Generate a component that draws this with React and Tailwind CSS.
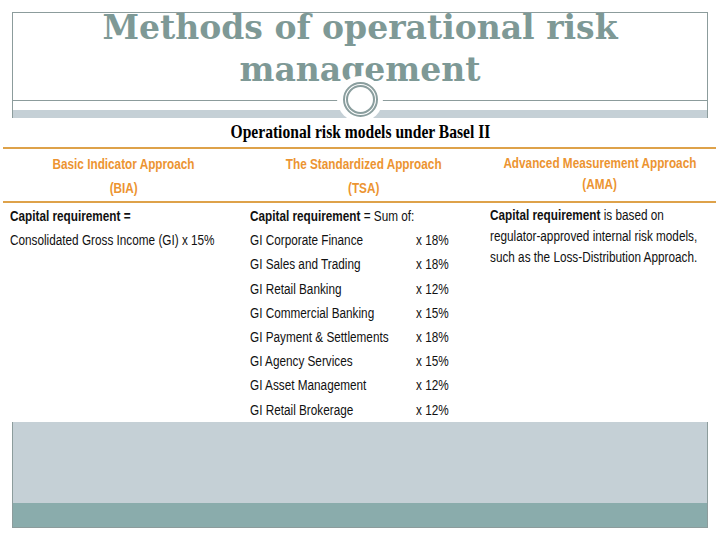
import React from 'react';

// no narrow face is installed, so Liberation Sans gets squeezed horizontally
const sans = "font-['Liberation_Sans',Arial,sans-serif]";

const tsaRows = [
  ['GI Corporate Finance', 'x 18%'],
  ['GI Sales and Trading', 'x 18%'],
  ['GI Retail Banking', 'x 12%'],
  ['GI Commercial Banking', 'x 15%'],
  ['GI Payment & Settlements', 'x 18%'],
  ['GI Agency Services', 'x 15%'],
  ['GI Asset Management', 'x 12%'],
  ['GI Retail Brokerage', 'x 12%'],
];

function Head({ lines, className }) {
  return (
    <div className={`flex flex-col items-center ${className}`}>
      {lines.map((l) => (
        <div key={l} className="whitespace-nowrap scale-x-[0.84]">{l}</div>
      ))}
    </div>
  );
}

export default function App() {
  return (
    <div className="w-[720px] h-[540px] bg-white overflow-hidden pt-[12px]">
      <div className="ml-[12px] w-[696px] h-[516px] border border-[#8c9c9c] flex flex-col">
        {/* title */}
        <div className="relative h-[88px] shrink-0 border-b border-[#8c9c9c]">
          <h1 className="-mt-[6px] text-center font-['DejaVu_Serif',serif] font-bold text-[33px] leading-[42px] text-[#7e9996]">
            Methods of operational risk
            <br />
            management
          </h1>
          <div className="absolute left-1/2 -translate-x-1/2 -bottom-[22px] z-10 w-[46px] h-[46px] rounded-full bg-white flex items-center justify-center">
            <div className="w-[35px] h-[35px] rounded-full border-[5px] border-double border-[#8a9e9e]" />
          </div>
        </div>
        <div className="h-[9px] shrink-0" />
        <div className="h-[8px] shrink-0 bg-[#c5d0d6]" />

        {/* pasted table picture */}
        <div className="relative z-20 -ml-[13px] w-[720px] h-[304px] shrink-0 bg-white text-[#111]">
          <div className="h-[29px] text-center">
            <span className="inline-block scale-x-[0.82] font-['Liberation_Serif',serif] font-bold text-[19px] leading-[27px] text-black">
              Operational risk models under Basel II
            </span>
          </div>

          <div className={`ml-[3px] w-[713px] grid grid-cols-[241px_240px_232px] border-y-2 border-[#dea24a] h-[56px] ${sans} font-bold text-[14px] text-[#ec9431]`}>
            <Head className="pt-[3px] leading-[24px]" lines={['Basic Indicator Approach', '(BIA)']} />
            <Head className="pt-[3px] leading-[24px]" lines={['The Standardized Approach', '(TSA)']} />
            <Head className="pt-[4px] leading-[21px]" lines={['Advanced Measurement Approach', '(AMA)']} />
          </div>

          <div className={`ml-[3px] w-[713px] grid grid-cols-[241px_240px_232px] ${sans} text-[14px]`}>
            <div className="pl-[7px] pt-[1px] leading-[24.2px]">
              <div className="w-[280px] origin-top-left scale-x-[0.84] whitespace-nowrap">
                <div className="font-bold">Capital requirement =</div>
                <div>Consolidated Gross Income (GI) x 15%</div>
              </div>
            </div>
            <div className="pl-[6px] pt-[1px] leading-[24.2px]">
              <div className="w-[280px] origin-top-left scale-x-[0.84] whitespace-nowrap">
                <div><span className="font-bold">Capital requirement</span> = Sum of:</div>
                {tsaRows.map(([label, pct]) => (
                  <div key={label} className="flex">
                    <span className="w-[197.6px]">{label}</span>
                    <span>{pct}</span>
                  </div>
                ))}
              </div>
            </div>
            <div className="pl-[6px] pt-[2px] leading-[21px]">
              <div className="w-[275px] origin-top-left scale-x-[0.84] whitespace-nowrap">
                <span className="font-bold">Capital requirement</span> is based on
                <br />
                regulator-approved internal risk models,
                <br />
                such as the Loss-Distribution Approach.
              </div>
            </div>
          </div>
        </div>

        <div className="flex-1 bg-[#c5d0d6]" />
        <div className="h-[24px] shrink-0 bg-[#8aacac]" />
      </div>
    </div>
  );
}
